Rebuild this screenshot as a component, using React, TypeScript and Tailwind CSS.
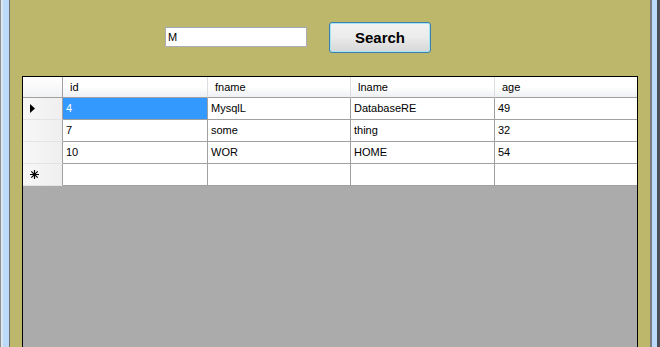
const rows = [
  { id: '4', fname: 'MysqlL', lname: 'DatabaseRE', age: '49' },
  { id: '7', fname: 'some', lname: 'thing', age: '32' },
  { id: '10', fname: 'WOR', lname: 'HOME', age: '54' },
]

const cols = ['id', 'fname', 'lname', 'age']

export default function App() {
  return (
    <div className="flex w-[660px] h-[347px] overflow-hidden font-['Liberation_Sans',Arial,sans-serif] text-[11px] text-black">
      {/* left window frame */}
      <div className="flex w-[10px] shrink-0">
        <div className="w-px bg-[#8d9196]" />
        <div className="w-[2px] bg-[#dce6ef]" />
        <div className="w-[6px] bg-[#bcdbfa]" />
        <div className="w-px bg-[#6e7074]" />
      </div>

      {/* form client area */}
      <div className="flex flex-col flex-1 bg-[#bdb76b] px-[12px]">
        <div className="flex h-[76px] shrink-0 pt-[22px] pl-[143px] gap-[22px]">
          <div className="mt-[5px] w-[142px] h-[20px] bg-white border border-[#abadb3] border-t-[#a3a9b8] flex items-center pl-[2px] text-[11px]">
            M
          </div>
          <button className="w-[102px] h-[31px] pt-[1px] rounded-[3px] border border-[#3c7fb1] bg-gradient-to-b from-[#f3f3f3] via-[#ebebeb] to-[#d6d6d6] shadow-[inset_0_0_0_1px_#a6e3f5] text-[15px] font-bold text-black">
            Search
          </button>
        </div>

        {/* DataGridView */}
        <div className="flex-1 border border-b-0 border-black bg-[#ababab]">
          <div className="grid grid-cols-[40px_145px_143px_144px_142px]">
            {/* header row */}
            <div className="h-[21px] border-r border-b border-[#a0a0a0] bg-gradient-to-b from-white to-[#f1f2f4]" />
            {cols.map((c, i) => (
              <div
                key={c}
                className={`h-[21px] border-b border-[#a0a0a0] bg-gradient-to-b from-white via-white to-[#eef0f3] flex items-center pl-[7px] pt-[1px] ${
                  i < 3 ? 'border-r border-r-[#dadde2]' : ''
                }`}
              >
                {c}
              </div>
            ))}

            {/* data rows */}
            {rows.map((r, ri) => (
              <div key={r.id} className="contents">
                <div className="h-[22px] border-r border-b border-r-[#a0a0a0] border-b-[#e4e4e4] bg-gradient-to-r from-[#f7f7f7] to-[#efefef] flex items-center pl-[7px]">
                  {ri === 0 && (
                    <svg width="5" height="9" viewBox="0 0 5 9">
                      <path d="M0 0 L5 4.5 L0 9 Z" fill="#000" />
                    </svg>
                  )}
                </div>
                <div
                  className={`h-[22px] border-r border-b border-[#a0a0a0] flex items-center pl-[3px] ${
                    ri === 0 ? 'bg-[#3399ff] text-white' : 'bg-white'
                  }`}
                >
                  {r.id}
                </div>
                <div className="h-[22px] border-r border-b border-[#a0a0a0] bg-white flex items-center pl-[3px]">{r.fname}</div>
                <div className="h-[22px] border-r border-b border-[#a0a0a0] bg-white flex items-center pl-[3px]">{r.lname}</div>
                <div className="h-[22px] border-b border-[#a0a0a0] bg-white flex items-center pl-[3px]">{r.age}</div>
              </div>
            ))}

            {/* new row */}
            <div className="h-[22px] border-r border-b border-[#a0a0a0] border-b-[#e4e4e4] bg-gradient-to-r from-[#f7f7f7] to-[#efefef] flex items-center pl-[7px]">
              <svg width="9" height="9" viewBox="0 0 9 9" stroke="#000" strokeWidth="1.2">
                <path d="M4.5 0 V9 M0 4.5 H9 M1.3 1.3 L7.7 7.7 M7.7 1.3 L1.3 7.7" />
              </svg>
            </div>
            <div className="h-[22px] border-r border-b border-[#a0a0a0] bg-white" />
            <div className="h-[22px] border-r border-b border-[#a0a0a0] bg-white" />
            <div className="h-[22px] border-r border-b border-[#a0a0a0] bg-white" />
            <div className="h-[22px] border-b border-[#a0a0a0] bg-white" />
          </div>
        </div>
      </div>

      {/* right window frame */}
      <div className="flex w-[10px] shrink-0">
        <div className="w-[2px] bg-[#7a7d82]" />
        <div className="w-[5px] bg-[#bcdbfa]" />
        <div className="w-[3px] bg-[#4a4e55]" />
      </div>
    </div>
  )
}
